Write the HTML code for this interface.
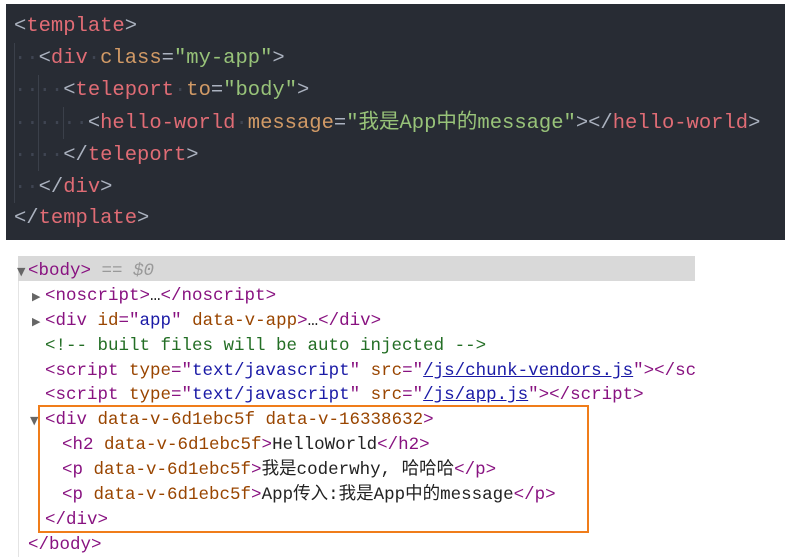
<!DOCTYPE html>
<html><head><meta charset="utf-8"><style>
html,body{margin:0;padding:0;background:#fff;width:791px;height:557px;overflow:hidden;position:relative}
.dark{position:absolute;left:6px;top:4px;width:779px;height:236px;background:#282c34}
.c{position:absolute;left:14px;font:20.5px/32px "Liberation Mono","Noto Sans CJK SC",monospace;white-space:pre;color:#abb2bf;margin-top:3px}
.t{color:#e06c75}.a{color:#d19a66}.s{color:#98c379}.g{color:#3f4552}
.vg{position:absolute;width:1px;background:#3b404a}
.dt{position:absolute;left:18px;top:256px;width:677px;height:301px;border-left:1px solid #e4e4e4}
.sel{position:absolute;left:18px;top:256px;width:677px;height:25px;background:#d9d9d9}
.d{position:absolute;font:17.5px/25px "Liberation Mono","Noto Sans CJK SC",monospace;white-space:pre;color:#222;max-width:650px;overflow:hidden;margin-top:2px}
.p{color:#881280}.b{color:#994500}.v{color:#1a1aa6}.cm{color:#236e25}.l{color:#1a1aa6;text-decoration:underline}.k{color:#999}
.tri{position:absolute;font:11px/25px "DejaVu Sans",sans-serif;color:#666;margin-top:2px}
.box{position:absolute;left:38px;top:405px;width:547px;height:124px;border:2.5px solid #f07d1a}
</style></head><body>
<div class="dark"></div>
<div class="vg" style="left:14px;top:43px;height:160px"></div>
<div class="vg" style="left:38px;top:75px;height:96px"></div>
<div class="vg" style="left:63px;top:107px;height:32px"></div>
<div class="c" style="top:8px">&lt;<span class="t">template</span>&gt;</div>
<div class="c" style="top:40px"><span class="g">··</span>&lt;<span class="t">div</span><span class="g">·</span><span class="a">class</span>=<span class="s">"my-app"</span>&gt;</div>
<div class="c" style="top:72px"><span class="g">····</span>&lt;<span class="t">teleport</span><span class="g">·</span><span class="a">to</span>=<span class="s">"body"</span>&gt;</div>
<div class="c" style="top:105px"><span class="g">······</span>&lt;<span class="t">hello-world</span><span class="g">·</span><span class="a">message</span>=<span class="s">"我是App中的message"</span>&gt;&lt;/<span class="t">hello-world</span>&gt;</div>
<div class="c" style="top:137px"><span class="g">····</span>&lt;/<span class="t">teleport</span>&gt;</div>
<div class="c" style="top:169px"><span class="g">··</span>&lt;/<span class="t">div</span>&gt;</div>
<div class="c" style="top:200px">&lt;/<span class="t">template</span>&gt;</div>

<div class="dt"></div>
<div class="sel"></div>
<div class="tri" style="left:17px;top:257px">▼</div>
<div class="d" style="left:28px;top:257px"><span class="p">&lt;body&gt;</span> <span class="k">== <i>$0</i></span></div>
<div class="tri" style="left:32px;top:282px">▶</div>
<div class="d" style="left:45px;top:282px"><span class="p">&lt;noscript&gt;</span>…<span class="p">&lt;/noscript&gt;</span></div>
<div class="tri" style="left:32px;top:307px">▶</div>
<div class="d" style="left:45px;top:307px"><span class="p">&lt;div </span><span class="b">id</span><span class="p">="</span><span class="v">app</span><span class="p">" </span><span class="b">data-v-app</span><span class="p">&gt;</span>…<span class="p">&lt;/div&gt;</span></div>
<div class="d cm" style="left:45px;top:332px">&lt;!-- built files will be auto injected --&gt;</div>
<div class="d" style="left:45px;top:357px"><span class="p">&lt;script </span><span class="b">type</span><span class="p">="</span><span class="v">text/javascript</span><span class="p">" </span><span class="b">src</span><span class="p">="</span><span class="l">/js/chunk-vendors.js</span><span class="p">"&gt;&lt;/script&gt;</span></div>
<div class="d" style="left:45px;top:381px"><span class="p">&lt;script </span><span class="b">type</span><span class="p">="</span><span class="v">text/javascript</span><span class="p">" </span><span class="b">src</span><span class="p">="</span><span class="l">/js/app.js</span><span class="p">"&gt;&lt;/script&gt;</span></div>
<div class="tri" style="left:30px;top:406px">▼</div>
<div class="d" style="left:45px;top:406px"><span class="p">&lt;div </span><span class="b">data-v-6d1ebc5f data-v-16338632</span><span class="p">&gt;</span></div>
<div class="d" style="left:62px;top:431px"><span class="p">&lt;h2 </span><span class="b">data-v-6d1ebc5f</span><span class="p">&gt;</span>HelloWorld<span class="p">&lt;/h2&gt;</span></div>
<div class="d" style="left:62px;top:456px"><span class="p">&lt;p </span><span class="b">data-v-6d1ebc5f</span><span class="p">&gt;</span>我是coderwhy, 哈哈哈<span class="p">&lt;/p&gt;</span></div>
<div class="d" style="left:62px;top:481px"><span class="p">&lt;p </span><span class="b">data-v-6d1ebc5f</span><span class="p">&gt;</span>App传入:我是App中的message<span class="p">&lt;/p&gt;</span></div>
<div class="d" style="left:45px;top:506px"><span class="p">&lt;/div&gt;</span></div>
<div class="d" style="left:28px;top:531px"><span class="p">&lt;/body&gt;</span></div>
<div class="box"></div>
</body></html>
